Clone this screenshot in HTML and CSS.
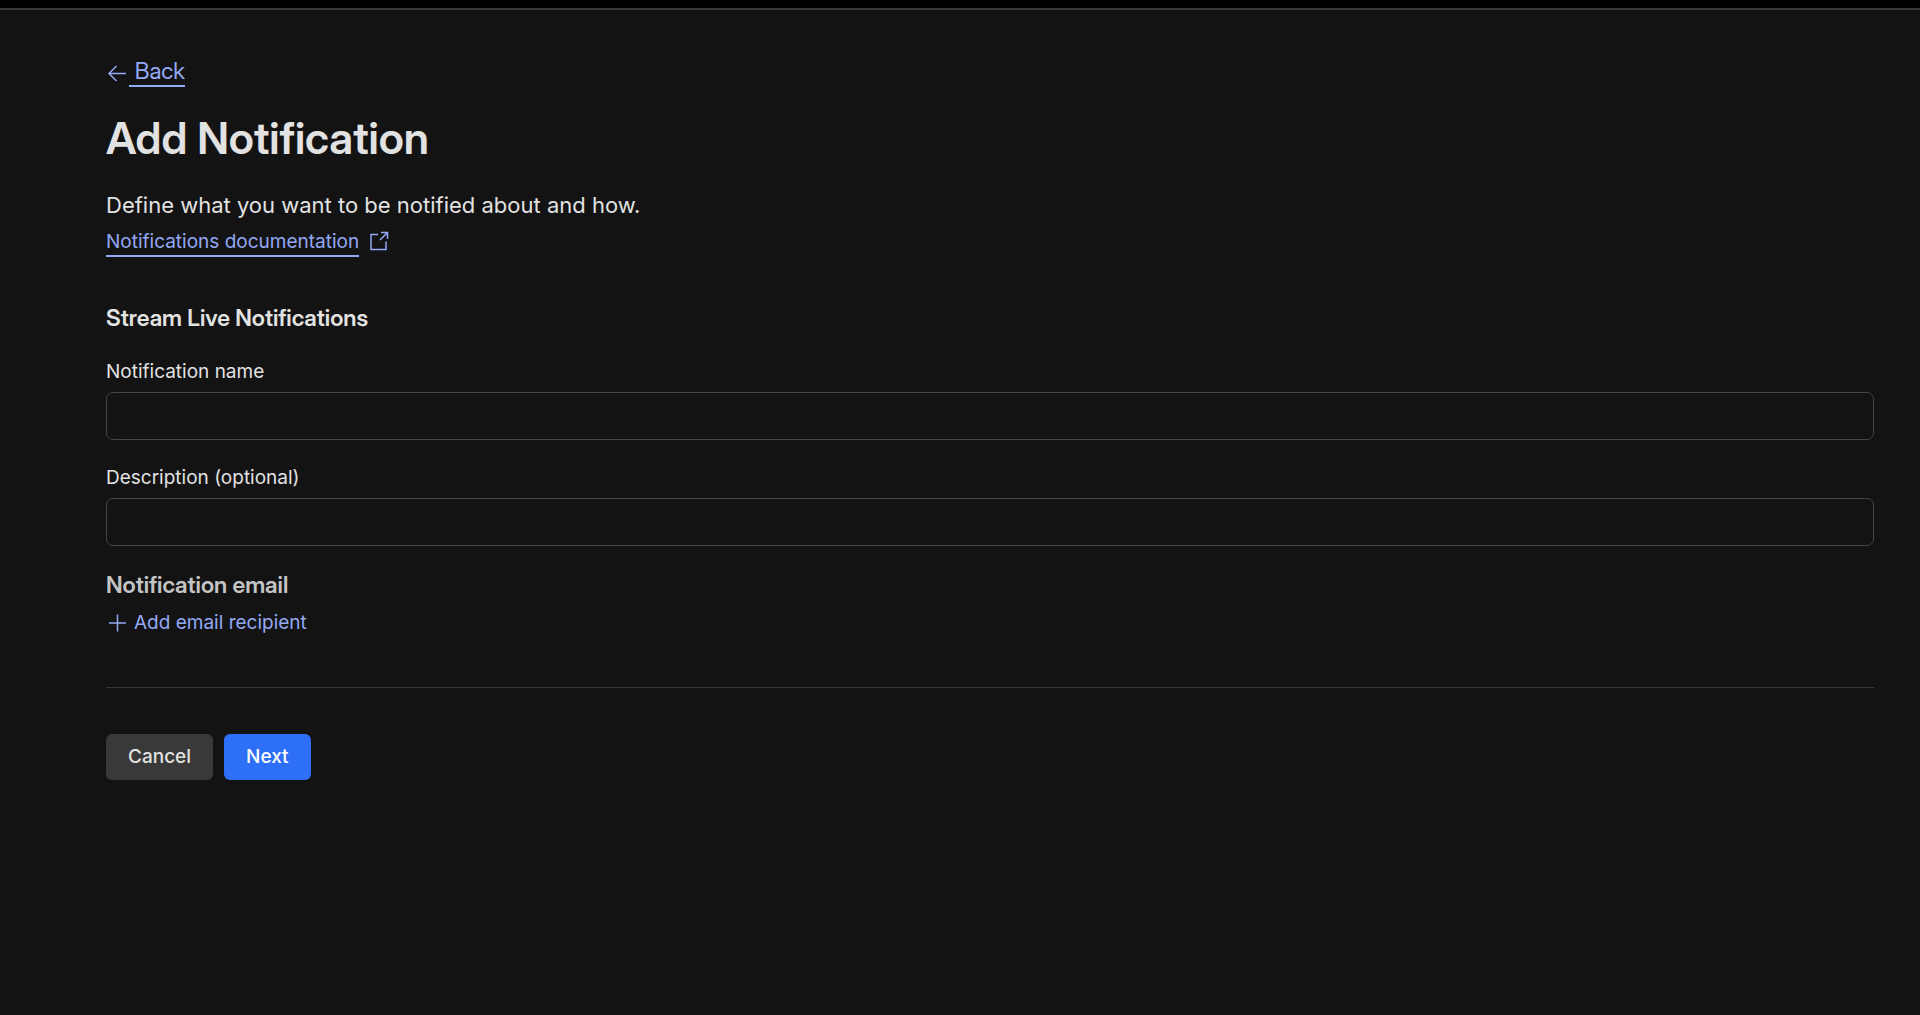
FILE: index.html
```html
<!DOCTYPE html>
<html lang="en">
<head>
<meta charset="utf-8">
<title>Add Notification</title>
<link rel="stylesheet" href="styles.css">
</head>
<body>
<header class="topbar"></header>
<main class="page">
  <a class="back" href="#">
    <svg class="back-icon" width="23" height="23" viewBox="0 0 23 23" aria-hidden="true"><path d="M20 12.500H3M10.500 5 3 12.500l7.500 7.500"/></svg><span class="back-text">&nbsp;Back</span>
  </a>
  <h1 class="title">Add Notification</h1>
  <p class="intro">Define what you want to be notified about and how.</p>
  <a class="docs" href="#">
    <span class="docs-text">Notifications documentation</span>
    <svg class="docs-icon" width="20" height="20" viewBox="0 0 20 20" aria-hidden="true"><path d="M9 3.500H2v15h15v-8M12 1.500h6.500V8M18.500 1.500 11 9"/></svg>
  </a>
  <form class="form">
    <h2 class="section-title">Stream Live Notifications</h2>
    <div class="field">
      <label class="label" for="name">Notification name</label>
      <input class="input" id="name" type="text">
    </div>
    <div class="field">
      <label class="label" for="description">Description (optional)</label>
      <input class="input" id="description" type="text">
    </div>
    <h3 class="email-title">Notification email</h3>
    <button class="add" type="button">
      <svg class="add-icon" width="22" height="22" viewBox="0 0 22 22" aria-hidden="true"><path d="M3 11h17M11.500 2.500v17"/></svg>
      Add email recipient
    </button>
    <div class="actions">
      <button class="btn" type="button">Cancel</button>
      <button class="btn btn-primary" type="submit">Next</button>
    </div>
  </form>
</main>
</body>
</html>
```
FILE: styles.css
```css
* {
  box-sizing: border-box;
}

body {
  margin: 0;
  min-height: 100vh;
  background: #131313;
  color: #e2e2e2;
  font-family: Inter, "Liberation Sans", sans-serif;
  font-size: 19px;
  line-height: 28px;
}

h1, h2, h3, p {
  margin: 0;
}

svg {
  fill: none;
  stroke: currentColor;
  stroke-width: 1.5;
  flex: none;
}

.topbar {
  height: 10px;
  background: #000;
  border-bottom: 2px solid #393939;
}

.page {
  padding: 47px 46px 46px 106px;
}

.back, .title, .section-title, .email-title {
  font-family: "Inter Display", Inter, "Liberation Sans", sans-serif;
  font-size: 23px;
}

.back, .docs, .add {
  display: flex;
  width: fit-content;
  align-items: center;
  color: #93a9f5;
  text-decoration: none;
}

.back-text {
  height: 30px;
  border-bottom: 2px solid;
}

.title {
  margin-top: 23px;
  font-size: 44px;
  line-height: 56px;
  font-weight: 600;
}

.intro {
  margin-top: 23px;
  font-size: 22px;
  line-height: 32px;
}

.docs {
  margin-top: 8px;
  gap: 10px;
}

.docs-text {
  line-height: 26px;
  border-bottom: 2px solid;
}

.docs-icon {
  margin-bottom: 4px;
}

.section-title {
  margin-top: 45px;
  line-height: 32px;
  font-weight: 600;
}

.field {
  display: flex;
  flex-direction: column;
  gap: 6px;
  margin-top: 24px;
}

.input {
  width: 100%;
  height: 48px;
  padding: 0 16px;
  border: 1px solid #444;
  border-radius: 7px;
  background: transparent;
  color: inherit;
  font: inherit;
}

.email-title {
  margin-top: 23px;
  color: #c4c4c4;
  line-height: 32px;
  font-weight: 600;
}

.add {
  margin-top: 8px;
  padding: 0;
  gap: 6px;
  border: 0;
  background: none;
  font: inherit;
}

.actions {
  display: flex;
  gap: 11px;
  margin-top: 50px;
  padding-top: 46px;
  border-top: 1px solid #393939;
}

.btn {
  height: 46px;
  padding: 0 22px;
  border: 0;
  border-radius: 6px;
  background: #393939;
  color: #e2e2e2;
  font: inherit;
  font-weight: 500;
}

.btn-primary {
  background: #2e6ff7;
  color: #fff;
}
```
